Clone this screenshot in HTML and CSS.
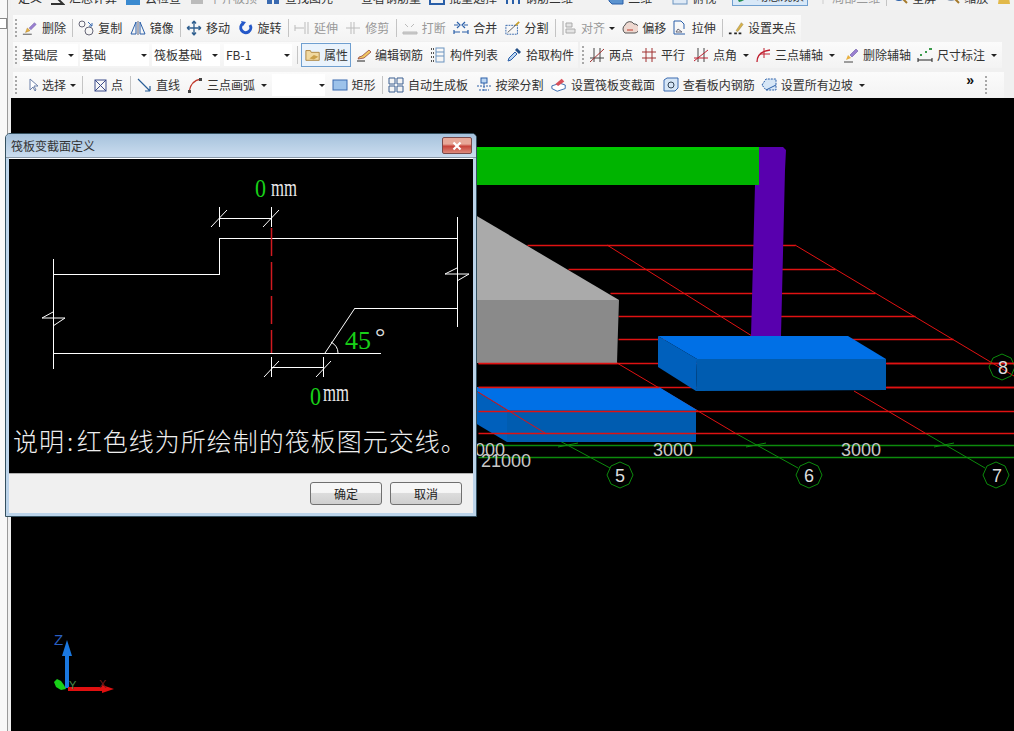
FILE: index.html
```html
<!DOCTYPE html>
<html lang="zh">
<head>
<meta charset="utf-8">
<title>筏板变截面定义</title>
<link rel="stylesheet" href="styles.css">
</head>
<body>
<div class="shell">
  <div class="edge"><span class="edge-tab"></span></div>
  <div class="main">
    <div class="row row0">
      <span class="tool t18"><span>定义</span></span>
      <span class="tool"><svg class="ic" viewBox="0 0 16 16"><path d="M2 2h12L8 8l6 6H2" fill="none" stroke="#333" stroke-width="2"/></svg><span>汇总计算</span></span>
      <span class="tool"><svg class="ic" viewBox="0 0 16 16"><rect x="1" y="1" width="14" height="14" fill="#3a8ad0"/></svg><span>云检查</span></span>
      <span class="tool off"><svg class="ic" viewBox="0 0 16 16"><rect x="2" y="4" width="12" height="10" fill="#bbb"/></svg><span>平齐板顶</span></span>
      <span class="tool"><svg class="ic" viewBox="0 0 16 16"><rect x="2" y="2" width="5" height="12" fill="#3a6ab0"/><rect x="9" y="2" width="5" height="12" fill="#3a6ab0"/></svg><span>查找图元</span></span>
      <span class="tool"><svg class="ic" viewBox="0 0 16 16"><circle cx="8" cy="1" r="6" fill="none" stroke="#333" stroke-width="2"/></svg><span>查看钢筋量</span></span>
      <span class="tool"><svg class="ic" viewBox="0 0 16 16"><rect x="1" y="0" width="14" height="14" fill="none" stroke="#2a5fa8" stroke-width="2"/></svg><span>批量选择</span></span>
      <span class="tool t-wide"><svg class="ic" viewBox="0 0 16 16"><path d="M2 0v14M8 0v14M14 0v14" stroke="#2a5fa8" stroke-width="2"/></svg><span>钢筋三维</span></span>
      <span class="tool pressed-light"><svg class="ic" viewBox="0 0 16 16"><path d="M1 0h11l3 2v12H4l-3-3z" fill="#5b93cf" stroke="#2a5fa8"/></svg><span>二维</span></span>
      <span class="tool t-view"><svg class="ic" viewBox="0 0 16 16"><rect x="1" y="0" width="14" height="14" fill="#dfeaf6" stroke="#6b93bf"/></svg><span>俯视</span></span>
      <span class="tool pressed"><svg class="ic" viewBox="0 0 16 16"><path d="M1 10C5 2 10 1 15 1c-1 7-6 12-12 13z" fill="#1f8a4c"/></svg><span>动态观察</span></span>
      <span class="tool off t-local"><svg class="ic" viewBox="0 0 16 16"><path d="M2 4l6-3 6 3-6 3z M8 7v7" fill="#ccc" stroke="#ccc"/></svg><span>局部三维</span></span>
      <i class="sep"></i>
      <span class="tool"><svg class="ic" viewBox="0 0 16 16"><circle cx="7" cy="4" r="6" fill="#cfe0f2" stroke="#2a5fa8" stroke-width="2"/><path d="M11 9l4 4" stroke="#a57a2a" stroke-width="2"/></svg><span>全屏</span></span>
      <span class="tool"><svg class="ic" viewBox="0 0 16 16"><circle cx="7" cy="4" r="6" fill="#eee" stroke="#8a9bb0" stroke-width="2"/><path d="M11 9l4 4" stroke="#a57a2a" stroke-width="2"/></svg><span>缩放</span></span>
      <svg class="ic" viewBox="0 0 16 16"><path d="M4 0h8l2 14H2z" fill="#e2b94a"/></svg>
    </div>

    <div class="row row1">
      <div class="band">
        <i class="grip"></i>
        <span class="tool"><svg class="ic" viewBox="0 0 18 16"><path d="M1 15h10" stroke="#444"/><path d="M4 13l2-5 3 3z" fill="#e8b040" stroke="#a77a20" stroke-width=".5"/><path d="M8 8l6-6 2 2-6 6z" fill="#9a7fd0" stroke="#5b4a9a" stroke-width=".5"/></svg><span>删除</span></span>
        <i class="sep"></i>
        <span class="tool"><svg class="ic" viewBox="0 0 16 16"><circle cx="4" cy="4" r="3" fill="none" stroke="#667"/><circle cx="11" cy="11" r="4" fill="none" stroke="#667"/><path d="M10 2l4 4M14 3v3h-3" fill="none" stroke="#3a6ab0"/></svg><span>复制</span></span>
        <span class="tool"><svg class="ic" viewBox="0 0 16 16"><path d="M6 2v12H1zM10 2v12h5z" fill="none" stroke="#2a5fa8"/><path d="M8 1v14" stroke="#667"/></svg><span>镜像</span></span>
        <i class="sep"></i>
        <span class="tool"><svg class="ic" viewBox="0 0 16 16"><path d="M8 1v14M1 8h14M8 1L6 3.500M8 1l2 2.500M8 15l-2-2.500M8 15l2-2.500M1 8l2.500-2M1 8l2.500 2M15 8l-2.500-2M15 8l-2.500 2" fill="none" stroke="#2f5f8f" stroke-width="1.300"/></svg><span>移动</span></span>
        <span class="tool"><svg class="ic" viewBox="0 0 16 16"><path d="M12 5A5 5 0 1 1 5 3.500" fill="none" stroke="#2458c8" stroke-width="3"/><path d="M3 1l5 1-3 4z" fill="#2458c8"/></svg><span>旋转</span></span>
        <i class="sep"></i>
        <span class="tool off"><svg class="ic" viewBox="0 0 16 16"><path d="M1 8h9M1 5v6M11 2v12M14 2v12" fill="none" stroke="#bbb"/></svg><span>延伸</span></span>
        <span class="tool off"><svg class="ic" viewBox="0 0 16 16"><path d="M1 8h14M6 2v12M9 2v12" fill="none" stroke="#bbb"/></svg><span>修剪</span></span>
        <i class="sep"></i>
        <span class="tool off"><svg class="ic" viewBox="0 0 16 16"><path d="M1 12h14v2H1zM3 4l3 3M12 4l-3 3" fill="#ccc" stroke="#bbb"/></svg><span>打断</span></span>
        <span class="tool"><svg class="ic" viewBox="0 0 16 16"><path d="M1 12h6M9 12h6M1 5h4M11 5h4M4 2l3 3-3 3M12 2L9 5l3 3M1 10v4M15 10v4" fill="none" stroke="#2a5fa8" stroke-width="1.200"/></svg><span>合并</span></span>
        <span class="tool"><svg class="ic" viewBox="0 0 18 16"><rect x="1" y="5" width="13" height="10" fill="none" stroke="#2a5fa8" stroke-dasharray="2 1"/><path d="M3 13L15 2" stroke="#555"/><path d="M12 5l4-4" stroke="#c9a02a" stroke-width="2"/></svg><span>分割</span></span>
        <i class="sep"></i>
        <span class="tool off"><svg class="ic" viewBox="0 0 16 16"><path d="M2 1v14M5 3h6v4H5zM5 9h9v4H5z" fill="#e4e4e4" stroke="#aaa"/></svg><span>对齐</span><i class="arrow"></i></span>
        <span class="tool t-offset"><svg class="ic" viewBox="0 0 16 16"><path d="M3 13a5 5 0 0 1 0-8 5 5 0 0 1 9-1 4.500 4.500 0 0 1 1 9z" fill="#eed8d0" stroke="#555"/><path d="M5 10h6" stroke="#c0392b"/></svg><span>偏移</span></span>
        <span class="tool"><svg class="ic" viewBox="0 0 16 16"><path d="M2 1h7l3 3v5M2 1v13h11" fill="none" stroke="#2a5fa8"/><path d="M6 9l4 3H4z" fill="none" stroke="#667"/></svg><span>拉伸</span></span>
        <i class="sep"></i>
        <span class="tool"><svg class="ic" viewBox="0 0 18 16"><path d="M1 14h3M7 14h3M12 14h3" stroke="#222" stroke-width="2"/><path d="M9 11l6-9 2 2-6 8z" fill="#d9b24a" stroke="#8a7a3a" stroke-width=".5"/></svg><span>设置夹点</span></span>
      </div>
    </div>

    <div class="row row2">
      <div class="band">
        <i class="grip"></i>
        <span class="combo c-floor">基础层<i class="arrow"></i></span>
        <span class="combo c-base">基础<i class="arrow"></i></span>
        <span class="combo c-type">筏板基础<i class="arrow"></i></span>
        <span class="combo c-name">FB-1<i class="arrow"></i></span>
        <i class="sep"></i>
        <span class="tool active"><svg class="ic" viewBox="0 0 18 16"><path d="M1 3h5l1 2h9v9H1z" fill="#f1d9a0" stroke="#a9803a"/><path d="M5 12l5-4 5 2-5 3z" fill="#caa04a"/></svg><span>属性</span></span>
        <span class="tool t3"><svg class="ic" viewBox="0 0 16 16"><path d="M1 14h8" stroke="#222"/><path d="M2 12l1-2 3-1 7-6 2 2-7 6z" fill="#f0c860" stroke="#8a3030" stroke-width=".7"/></svg><span>编辑钢筋</span></span>
        <span class="tool"><svg class="ic" viewBox="0 0 16 16"><path d="M1 2h3M1 6h3M1 10h3M1 14h3" stroke="#555" stroke-width="2" stroke-dasharray="1 1"/><rect x="6" y="1" width="8" height="14" fill="none" stroke="#6b93bf"/><path d="M6 5h8M6 9h8" stroke="#6b93bf"/></svg><span>构件列表</span></span>
        <span class="tool"><svg class="ic" viewBox="0 0 16 16"><path d="M2 14l1-3 6-6 2 2-6 6z" fill="#bcd6f2" stroke="#2a5fa8"/><path d="M9 3l2-2 4 4-2 2z" fill="#234f86"/></svg><span>拾取构件</span></span>
      </div>
      <div class="band band-right">
        <i class="grip"></i>
        <span class="tool"><svg class="ic" viewBox="0 0 16 16"><path d="M5 1v14M11 1v14M1 11h14" stroke="#444"/><path d="M1 15L15 2" stroke="#a03030"/></svg><span>两点</span></span>
        <span class="tool"><svg class="ic" viewBox="0 0 16 16"><path d="M1 5h14M1 11h14M5 1v14M11 1v14" stroke="#a03030"/></svg><span>平行</span></span>
        <span class="tool"><svg class="ic" viewBox="0 0 16 16"><path d="M5 1v14M11 1v14" stroke="#444"/><path d="M1 14L15 3M1 11h14" stroke="#c02030"/></svg><span>点角</span><i class="arrow a-far"></i></span>
        <span class="tool t5"><svg class="ic" viewBox="0 0 16 16"><path d="M2 15C2 8 7 4 15 3" fill="none" stroke="#c02030" stroke-width="1.300"/><path d="M9 1v10M5 7h10" stroke="#c02030"/></svg><span>三点辅轴</span><i class="arrow a-far"></i></span>
        <span class="tool"><svg class="ic" viewBox="0 0 16 16"><path d="M1 15h9" stroke="#444"/><path d="M3 13l2-5 3 3z" fill="#e8b040"/><path d="M7 8l6-6 2 2-6 6z" fill="#9a7fd0" stroke="#5b4a9a" stroke-width=".5"/></svg><span>删除辅轴</span></span>
        <span class="tool t-dim"><svg class="ic" viewBox="0 0 16 16"><path d="M1 11v4M15 11v4M1 13h14" stroke="#222"/><path d="M3 8h2M8 5h2M12 2h3" stroke="#3a9a4a" stroke-width="2"/></svg><span>尺寸标注</span><i class="arrow a-far"></i></span>
      </div>
    </div>

    <div class="row row3">
      <div class="band band-full">
        <i class="grip"></i>
        <span class="tool t-select"><svg class="ic" viewBox="0 0 16 16"><path d="M5 2v11l3-3 2 4 1-1-2-4h4z" fill="#fff" stroke="#6b7fa8"/></svg><span>选择</span><i class="arrow a-far"></i></span>
        <i class="sep s-wide"></i>
        <span class="tool t-point"><svg class="ic" viewBox="0 0 16 16"><rect x="2" y="3" width="11" height="11" fill="none" stroke="#3a4a8a"/><path d="M2 3l11 11M13 3L2 14" stroke="#3a4a8a"/></svg><span>点</span></span>
        <i class="sep"></i>
        <span class="tool t-line"><svg class="ic" viewBox="0 0 16 16"><path d="M2 2l12 12M14 14v-5M14 14H9" fill="none" stroke="#2a5f98" stroke-width="1.200"/></svg><span>直线</span></span>
        <span class="tool"><svg class="ic" viewBox="0 0 16 16"><path d="M2 15C3 8 7 3 14 2" fill="none" stroke="#c0392b" stroke-width="1.300"/><path d="M1 13h3v3H1zM12 1h3v3h-3z" fill="#444"/></svg><span>三点画弧</span><i class="arrow a-far"></i></span>
        <span class="combo c-blank"><i class="arrow"></i></span>
        <span class="tool"><svg class="ic" viewBox="0 0 16 16"><rect x="1" y="3" width="14" height="10" fill="#9cc2ea" stroke="#3a6ab0"/></svg><span>矩形</span></span>
        <i class="sep"></i>
        <span class="tool"><svg class="ic" viewBox="0 0 16 16"><path d="M1 1h6v6H1zM9 1h6v6H9zM1 9h6v6H1zM9 9h6v6H9z" fill="#f4f4f4" stroke="#3a5f90"/></svg><span>自动生成板</span></span>
        <span class="tool"><svg class="ic" viewBox="0 0 16 16"><rect x="5" y="1" width="6" height="5" fill="#bcd6f2" stroke="#2a5fa8"/><path d="M1 9h14M8 6v9M3 13h10" stroke="#2a5fa8" stroke-dasharray="2 1"/></svg><span>按梁分割</span></span>
        <span class="tool"><svg class="ic" viewBox="0 0 18 16"><path d="M1 9l9-3 6 2v4l-9 3-6-3z" fill="#fff" stroke="#2a5fa8"/><path d="M5 7l7-6 3 3-7 5z" fill="#d8505a"/></svg><span>设置筏板变截面</span></span>
        <span class="tool t-rebar"><svg class="ic" viewBox="0 0 16 16"><path d="M1 3l3-2h11v10l-3 3H1z" fill="#d6e6f6" stroke="#3a6ab0"/><circle cx="8" cy="8" r="3" fill="none" stroke="#345"/></svg><span>查看板内钢筋</span></span>
        <span class="tool"><svg class="ic" viewBox="0 0 16 16"><path d="M1 8l4-6h10v11H5z" fill="#d6e6f6" stroke="#2a5fa8" stroke-dasharray="2 1"/><path d="M5 13l10-5" stroke="#2a5fa8"/></svg><span>设置所有边坡</span><i class="arrow a-far"></i></span>
        <span class="more">»</span>
        <i class="grip g-end"></i>
      </div>
    </div>

    <div class="canvas">
      <svg class="scene" viewBox="11 98 1003 633">
        <g class="red">
          <path d="M527 245H795M568 269H835M610 293H875M618 316H915M618 339H953M478 363H1014M478 387H1014"/>
        </g>
        <g class="red slant">
          <path d="M795 245L1014 376M607 245L752 336M854 391L925 433M617 363L735 433"/>
        </g>
        <g class="dim">
          <path d="M478 445H1014M478 457H1014"/>
        </g>
        <g class="dim slant">
          <path d="M545 433L610 468M735 433L798 468M925 433L985 468"/>
          <path d="M558 447L578 443M746 447L766 443M934 447L954 443"/>
          <path d="M620 462l9 4 4 9-4 9-9 4-9-4-4-9 4-9zM809 462l9 4 4 9-4 9-9 4-9-4-4-9 4-9zM996 462l9 4 4 9-4 9-9 4-9-4-4-9 4-9zM1002 354l9 4 4 9-4 9-9 4-9-4-4-9 4-9z"/>
        </g>
        <polygon class="green-top" points="470,147 759,147 759,150 470,150"/>
        <polygon class="green" points="470,150 759,150 759,185 470,185"/>
        <polygon class="purple" points="759,147 783,147 786,150 785,170 781,336 751,336 755,185 759,185"/>
        <polygon class="gray-top" points="470,212 619,300 470,300"/>
        <polygon class="gray-front" points="470,300 619,300 618,330 617,363 470,363"/>
        <polygon class="slab-top" points="658,336 848,336 886,359 697,359"/>
        <polygon class="slab-side" points="658,336 697,359 696,391 658,367"/>
        <polygon class="slab-front" points="697,359 886,359 886,390 696,391"/>
        <polygon class="slab-top" points="470,387 659,387 697,410 507,410"/>
        <polygon class="slab-side" points="470,387 507,410 507,442 470,420"/>
        <polygon class="slab-front" points="507,410 696,410 696,442 507,442"/>
        <g class="red">
          <path d="M478 363H617M478 387H659M478 411H1014M478 433H1014"/>
          <path d="M886 363H1014M886 387H1014"/>
        </g>
        <g class="red slant">
          <path d="M478 392L545 433"/>
        </g>
        <text class="num" x="465" y="456">3000</text>
        <text class="num" x="653" y="456">3000</text>
        <text class="num" x="841" y="456">3000</text>
        <text class="num" x="481" y="467">21000</text>
        <text class="num mid" x="620" y="482">5</text>
        <text class="num mid" x="809" y="482">6</text>
        <text class="num mid" x="997" y="482">7</text>
        <text class="num mid" x="1003" y="374">8</text>
        <path class="ax-z" d="M67 688V650"/>
        <polygon class="ax-z-head" points="67,640 72,656 62,656"/>
        <path class="ax-x" d="M68 689H104"/>
        <polygon class="ax-x-head" points="114,689 102,685 102,693"/>
        <path class="ax-y" d="M54 682l3-3 4 2 3 4 2 4-5 1-5-3z"/>
        <text class="ax-label z" x="54" y="645">Z</text>
        <text class="ax-label y" x="69" y="689">Y</text>
        <text class="ax-label x" x="99" y="688">X</text>
      </svg>
    </div>
  </div>
</div>

<div class="dialog">
  <div class="dlg-title">
    <span>筏板变截面定义</span>
    <span class="dlg-close">
      <svg class="close-x" viewBox="0 0 10 10"><path d="M1.500 1.500l7 7M8.500 1.500l-7 7"/></svg>
    </span>
  </div>
  <div class="dlg-panel">
    <svg class="section" viewBox="9 159 464 314">
      <g class="w">
        <path d="M53 259V369M53 274H219V238H457M457 217V327M457 308H355M53 353H381"/>
        <path class="thin" d="M219 218H271M271 367H323"/>
        <path class="thin" d="M219 207V227M271 207V227M271 357V377M323 357V377"/>
      </g>
      <g class="w slant">
        <path d="M355 308L325 353"/>
        <path class="thin" d="M53 312L42 318H65L53 326M457 268L445 274H469L457 281"/>
        <path class="thin" d="M211 227L227 210M263 227L279 210M264 377L279 361M316 377L331 361"/>
        <path class="thin" d="M331 342Q338 346 338 353"/>
      </g>
      <path class="cut" d="M271 228V353"/>
      <text class="g-num big" x="255" y="197" textLength="11" lengthAdjust="spacingAndGlyphs">0</text>
      <text class="w-txt" x="271" y="196" textLength="26" lengthAdjust="spacingAndGlyphs">mm</text>
      <text class="g-num angle" x="345" y="349">45</text>
      <text class="deg" x="375" y="345">°</text>
      <text class="g-num big" x="310" y="405" textLength="11" lengthAdjust="spacingAndGlyphs">0</text>
      <text class="w-txt" x="323" y="401" textLength="26" lengthAdjust="spacingAndGlyphs">mm</text>
      <text class="note" x="13" y="451">说明<tspan dx="2">:</tspan><tspan dx="2.500">红色线为所绘制的筏板图元交线。</tspan></text>
    </svg>
  </div>
  <div class="dlg-foot">
    <button class="btn" type="button">确定</button>
    <button class="btn" type="button">取消</button>
  </div>
</div>
</body>
</html>
```

FILE: styles.css
```css
* { box-sizing: border-box; }
html, body { margin: 0; padding: 0; height: 100%; }
body {
  width: 1014px;
  height: 731px;
  overflow: hidden;
  position: relative;
  background: #f0f0f0;
  color: #333;
  font: 12px/16px "Noto Sans CJK SC", "Liberation Sans", sans-serif;
}
.shell { display: flex; height: 731px; }
.edge {
  width: 11px;
  flex: none;
  background: linear-gradient(to right, #f8f8f8 0 7px, #9a9a9a 7px 8px, #f0f0f0 8px);
  padding-top: 18px;
}
.edge-tab { display: block; width: 7px; height: 11px; border: 1px solid #888; border-left: 0; background: #fff; }
.main { flex: 1; min-width: 0; display: flex; flex-direction: column; }

.row { display: flex; align-items: center; white-space: nowrap; padding-left: 2px; flex: none; }
.row0 { height: 10px; align-items: flex-end; overflow: hidden; padding: 0 0 4px 7px; background: #f2f2f2; }
.row1 { height: 31px; align-items: flex-end; }
.row2 { height: 28px; }
.row3 { height: 29px; padding-right: 10px; padding-top: 3px; }

.band {
  display: flex;
  align-items: center;
  height: 26px;
  background: linear-gradient(#fbfbfb, #f3f3f3);
}
.row1 .band { width: 788px; }
.row2 .band { width: 565px; }
.row2 .band-right { width: 422px; margin-left: 2px; }
.band-full { flex: 1; }

.grip {
  width: 2px;
  height: 18px;
  margin: 0 5px 0 2px;
  flex: none;
  background: repeating-linear-gradient(#a8a8a8 0 2px, transparent 2px 4px);
}
.g-end { margin: 0 0 0 7px; }

.tool { display: inline-flex; align-items: center; gap: 4px; margin-right: 8px; flex: none; }
.tool.off { color: #999; }
.row1 .tool { gap: 3.900px; margin-right: 7.500px; }
.row1 .t-offset { margin-right: 5.500px; }
.row3 .tool { margin-right: 7.500px; }
.row2 .t3 { margin-left: 0; gap: 3px; margin-right: 7px; }
.t5 { margin-left: -6px; margin-right: 4px; }
.t-dim { margin-left: -2px; }
.ic { width: 16px; height: 16px; flex: none; display: block; }
.sep { width: 1px; height: 18px; margin: 0 5px 0 -1px; background: #c4c4c4; flex: none; }
.s-wide { margin-left: 2px; margin-right: 10px; }

.arrow {
  width: 0;
  height: 0;
  flex: none;
  border-left: 3px solid transparent;
  border-right: 3px solid transparent;
  border-top: 3px solid #222;
}
.a-far { margin-left: 2px; margin-right: 4px; }

.combo {
  display: flex;
  align-items: center;
  justify-content: space-between;
  height: 22px;
  padding: 0 2px;
  margin-right: 2px;
  background: #fff;
  flex: none;
}
.c-floor { width: 58px; margin-left: -2px; padding-right: 4px; }
.c-base { width: 69px; padding-right: 2px; margin-right: 3px; }
.c-type { width: 68px; padding-right: 2px; margin-right: 4px; }
.c-name { width: 68px; padding-right: 2px; margin-right: 6px; }
.c-blank { width: 53px; margin: 0 7px 0 -7px; padding-right: 0; justify-content: flex-end; }

.active {
  width: 50px;
  height: 24px;
  padding-left: 3px;
  margin-right: 5px;
  margin-left: -2px;
  gap: 3px;
  border: 1px solid #6f9fd0;
  background: #eaf3fc;
}
.t18 { margin-left: 0; margin-right: 7px; }
.t-wide { margin-right: 35px; }
.pressed-light { margin-right: 20px; }
.t-view { margin-right: 16px; }
.pressed { height: 20px; padding: 0 3px; margin-right: 7px; border: 1px solid #6f9fd0; background: #d8e8f8; }
.row0 .t-local { gap: 1px; margin-right: 7px; }
.row3 .t-select { margin-left: 3px; gap: 1px; margin-right: 0; }
.row3 .t-select .a-far { margin-left: 3px; }
.row3 .t-point { gap: 2px; margin-right: 8px; }
.row3 .t-line { margin-right: 7px; }
.row3 .t-rebar { margin-right: 6px; }
.more { margin-left: 90px; width: 12px; font: bold 14px/12px "Liberation Sans", sans-serif; color: #111; margin-top: -10px; flex: none; }

.canvas { flex: 1; min-height: 0; background: #000; overflow: hidden; }
.scene { display: block; width: 1003px; height: 633px; }
.scene path { fill: none; }
.red path { stroke: #e01212; stroke-width: 1.400; transform: translate(.5px, .5px); }
.dim path { stroke: #0c8a0c; stroke-width: 1.300; transform: translate(.5px, .5px); }
.slant path { stroke-width: 1; transform: none; }
.green { fill: #00b400; }
.green-top { fill: #00c800; }
.purple { fill: #5800ae; }
.gray-top { fill: #aaaaaa; }
.gray-front { fill: #8a8a8a; }
.slab-top { fill: #0070e6; }
.slab-side { fill: #0060bc; }
.slab-front { fill: #005cb0; }
.num { font: 18px "Liberation Sans", sans-serif; fill: #c8c8c8; }
.mid { text-anchor: middle; fill: #dddddd; }
.scene .ax-z { stroke: #1a78e0; stroke-width: 4; }
.ax-z-head { fill: #1a78e0; }
.scene .ax-x { stroke: #e01010; stroke-width: 4; }
.ax-x-head { fill: #e01010; }
.scene .ax-y { fill: #18d018; }
.ax-label { font: 12px "Liberation Sans", sans-serif; }
.ax-label.z { fill: #2a5fc0; font-size: 15px; }
.ax-label.y { fill: #4a8a4a; font-size: 11px; }
.ax-label.x { fill: #7a1a1a; font-size: 11px; }

.dialog {
  position: absolute;
  left: 5px;
  top: 133px;
  width: 472px;
  height: 384px;
  border: 1px solid #34505f;
  border-radius: 5px 5px 0 0;
  background: #bcd4ea;
  display: flex;
  flex-direction: column;
  padding: 0 3px 3px;
}
.dlg-title {
  height: 24px;
  margin: 0 -3px;
  padding: 0 4px 0 5px;
  flex: none;
  display: flex;
  align-items: center;
  justify-content: space-between;
  border-radius: 4px 4px 0 0;
  background: linear-gradient(#a6c2dc, #cbddef);
  color: #333;
  border-bottom: 1px solid #8a98a6;
}
.dlg-close {
  width: 30px;
  height: 17px;
  display: flex;
  align-items: center;
  justify-content: center;
  border: 1px solid #7a4a4a;
  border-radius: 2px;
  background: linear-gradient(#e8a898 0 40%, #c8443a 55%, #dd8a7a);
}
.close-x { width: 10px; height: 10px; display: block; }
.close-x path { stroke: #fff; stroke-width: 2.200; fill: none; }
.dlg-panel { height: 315px; flex: none; background: #000; border-top: 1px solid #fff; }
.section { display: block; width: 464px; height: 314px; }
.w path { fill: none; stroke: #fff; stroke-width: 1; shape-rendering: crispEdges; }
.w.slant path { shape-rendering: auto; }
.cut { fill: none; stroke: #d01a20; stroke-width: 1.500; stroke-dasharray: 28 6; transform: translate(.5px, 0); }
.g-num { font-family: "Liberation Serif", serif; fill: #18d018; }
.big { font-size: 26px; }
.angle { font-size: 26px; }
.w-txt { font: 26px "Liberation Serif", serif; fill: #e8e8e8; }
.deg { font: 26px "Liberation Serif", serif; fill: #ddd; }
.note { font: 300 25px "Noto Sans CJK SC", sans-serif; letter-spacing: 1px; fill: #eeeeee; }
.dlg-foot {
  flex: 1;
  background: #f0f0f0;
  display: flex;
  justify-content: flex-end;
  align-items: center;
  gap: 8px;
  padding-right: 11px;
  border-top: 1px solid #b0b0b0;
}
.btn {
  width: 72px;
  height: 23px;
  padding: 0;
  border: 1px solid #707070;
  border-radius: 3px;
  background: linear-gradient(#f6f6f6 0 45%, #dcdcdc 50%, #cfcfcf);
  color: #222;
  font: 12px "Noto Sans CJK SC", sans-serif;
}
```
